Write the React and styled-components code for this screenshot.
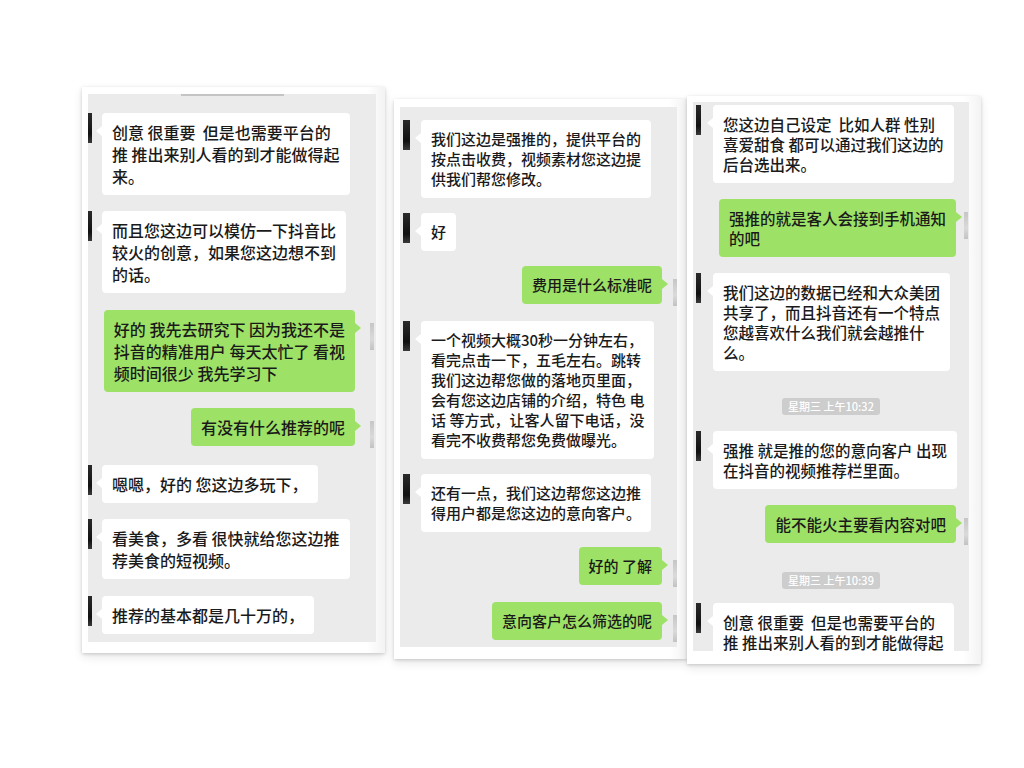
import styled, { createGlobalStyle } from 'styled-components'

const GlobalStyle = createGlobalStyle`
  html, body {
    margin: 0;
    padding: 0;
    background: #ffffff;
  }
  body {
    font-family: "Noto Sans CJK SC", "Noto Sans", sans-serif;
  }
`

const panels = [
  {
    id: 'p1',
    top: 87,
    left: 0,
    width: 303,
    pad: '7px 9px 11px 6px',
    height: 548,
    font: 16,
    line: 22,
    padY: 8,
    gap: 16.5,
    padTop: 0,
    crop: true,
    inside: { inset: 0, width: 4, gap: 10 },
    outside: { inset: 2, width: 4, gap: 15 },
    items: [
      { side: 'in', lines: ['创意 很重要  但是也需要平台的', '推 推出来别人看的到才能做得起', '来。'] },
      { side: 'in', lines: ['而且您这边可以模仿一下抖音比', '较火的创意，如果您这边想不到', '的话。'] },
      { side: 'out', lines: ['好的 我先去研究下 因为我还不是', '抖音的精准用户 每天太忙了 看视', '频时间很少 我先学习下'] },
      { side: 'out', lines: ['有没有什么推荐的呢'] },
      { side: 'in', lines: ['嗯嗯，好的 您这边多玩下，'] },
      { side: 'in', lines: ['看美食，多看 很快就给您这边推', '荐美食的短视频。'] },
      { side: 'in', lines: ['推荐的基本都是几十万的，'] },
    ],
  },
  {
    id: 'p2',
    top: 99,
    left: 9,
    width: 293,
    pad: '8px 10px 12px 6px',
    height: 540,
    font: 15,
    line: 20,
    padY: 9,
    gap: 15,
    padTop: 13,
    inside: { inset: 3, width: 7, gap: 11 },
    outside: { inset: 0, width: 4, gap: 11 },
    items: [
      { side: 'in', lines: ['我们这边是强推的，提供平台的', '按点击收费，视频素材您这边提', '供我们帮您修改。'] },
      { side: 'in', lines: ['好'] },
      { side: 'out', lines: ['费用是什么标准呢'] },
      {
        side: 'in',
        lines: [
          '一个视频大概30秒一分钟左右，',
          '看完点击一下，五毛左右。跳转',
          '我们这边帮您做的落地页里面，',
          '会有您这边店铺的介绍，特色 电',
          '话 等方式，让客人留下电话，没',
          '看完不收费帮您免费做曝光。',
        ],
      },
      { side: 'in', lines: ['还有一点，我们这边帮您这边推', '得用户都是您这边的意向客户。'] },
      { side: 'out', lines: ['好的 了解'] },
      { side: 'out', lines: ['意向客户怎么筛选的呢'] },
    ],
  },
  {
    id: 'p3',
    top: 96,
    left: 0,
    width: 294,
    pad: '6px 12px 13px 6px',
    height: 549,
    font: 15.5,
    line: 20,
    padY: 9,
    gap: 16,
    padTop: 3,
    inside: { inset: 3, width: 5, gap: 12 },
    outside: { inset: 1, width: 4, gap: 8 },
    items: [
      { side: 'in', lines: ['您这边自己设定  比如人群 性别', '喜爱甜食 都可以通过我们这边的', '后台选出来。'] },
      { side: 'out', lines: ['强推的就是客人会接到手机通知', '的吧'] },
      { side: 'in', lines: ['我们这边的数据已经和大众美团', '共享了，而且抖音还有一个特点', '您越喜欢什么我们就会越推什', '么。'] },
      { time: '星期三 上午10:32' },
      { side: 'in', lines: ['强推 就是推的您的意向客户 出现', '在抖音的视频推荐栏里面。'] },
      { side: 'out', lines: ['能不能火主要看内容对吧'] },
      { time: '星期三 上午10:39', after: 14 },
      { side: 'in', lines: ['创意 很重要  但是也需要平台的', '推 推出来别人看的到才能做得起', '来。'] },
    ],
  },
]

const App = () => {
  return (
    <>
      <GlobalStyle />
      <Page>
        {panels.map(p => (
          <Frame key={p.id} $top={p.top} $left={p.left} $width={p.width} $pad={p.pad}>
            <Screen $height={p.height} $font={p.font} $line={p.line} $gap={p.gap} $padTop={p.padTop}>
              {p.crop && <TopCrop />}
              {p.items.map((m, i) => {
                if (m.time) return <TimeTag key={i} $after={m.after}>{m.time}</TimeTag>
                const out = m.side === 'out'
                const cfg = out ? p.outside : p.inside
                return (
                  <Row key={i} $out={out} $inset={cfg.inset}>
                    <Avatar $out={out} $width={cfg.width} />
                    <Bubble $out={out} $gap={cfg.gap} $padY={p.padY}>
                      {m.lines.map((l, j) => (
                        <Line key={j}>{l}</Line>
                      ))}
                    </Bubble>
                  </Row>
                )
              })}
            </Screen>
          </Frame>
        ))}
      </Page>
    </>
  )
}

export default App

const Page = styled.div`
  width: 1024px;
  height: 768px;
  display: flex;
  align-items: flex-start;
  padding-left: 82px;
  box-sizing: border-box;
  background: #ffffff;
  overflow: hidden;
`

const Frame = styled.div`
  margin-top: ${props => props.$top}px;
  margin-left: ${props => props.$left}px;
  width: ${props => props.$width}px;
  padding: ${props => props.$pad};
  box-sizing: border-box;
  background: linear-gradient(90deg, #ffffff 0%, #ffffff 94%, #f3f3f3 100%);
  box-shadow: 0 1px 3px rgba(0, 0, 0, 0.16), 0 4px 9px rgba(0, 0, 0, 0.1);
`

const Screen = styled.div`
  height: ${props => props.$height}px;
  background: #ebebeb;
  overflow: hidden;
  display: flex;
  flex-direction: column;
  gap: ${props => props.$gap}px;
  padding-top: ${props => props.$padTop}px;
  box-sizing: border-box;
  font-size: ${props => props.$font}px;
  font-weight: 500;
  line-height: ${props => props.$line}px;
  color: #1a1a1a;
`

const TopCrop = styled.div`
  align-self: center;
  width: 103px;
  height: 2px;
  flex-shrink: 0;
  background: #c4c4c4;
`

const Row = styled.div`
  display: flex;
  flex-direction: ${props => (props.$out ? 'row-reverse' : 'row')};
  align-items: flex-start;
  flex-shrink: 0;
  padding: 0 ${props => props.$inset}px;
`

const Avatar = styled.div`
  width: ${props => props.$width}px;
  height: ${props => (props.$out ? 27 : 30)}px;
  margin-top: ${props => (props.$out ? 13 : 0)}px;
  flex-shrink: 0;
  background: ${props =>
    props.$out
      ? 'linear-gradient(180deg, #c6c6c6 0%, #dadada 60%, #c2c2c2 100%)'
      : 'linear-gradient(180deg, #2a2a2a 0%, #111111 70%, #3a3a3a 100%)'};
`

const Bubble = styled.div`
  position: relative;
  ${props => (props.$out ? 'margin-right' : 'margin-left')}: ${props => props.$gap}px;
  padding: ${props => props.$padY}px 10px;
  border-radius: 4px;
  background: ${props => (props.$out ? '#9de166' : '#ffffff')};

  &::after {
    content: '';
    position: absolute;
    top: 13px;
    ${props => (props.$out ? 'right: -6px' : 'left: -6px')};
    border-top: 5px solid transparent;
    border-bottom: 5px solid transparent;
    ${props => (props.$out ? 'border-left: 6px solid #9de166' : 'border-right: 6px solid #ffffff')};
  }
`

const Line = styled.span`
  display: block;
  white-space: pre;
`

const TimeTag = styled.div`
  align-self: center;
  flex-shrink: 0;
  margin-top: 11px;
  margin-bottom: ${props => (props.$after ? props.$after - 16 : 0)}px;
  padding: 0 6px;
  border-radius: 3px;
  background: #cdcdcd;
  color: #ffffff;
  font-size: 11px;
  line-height: 17px;
`
